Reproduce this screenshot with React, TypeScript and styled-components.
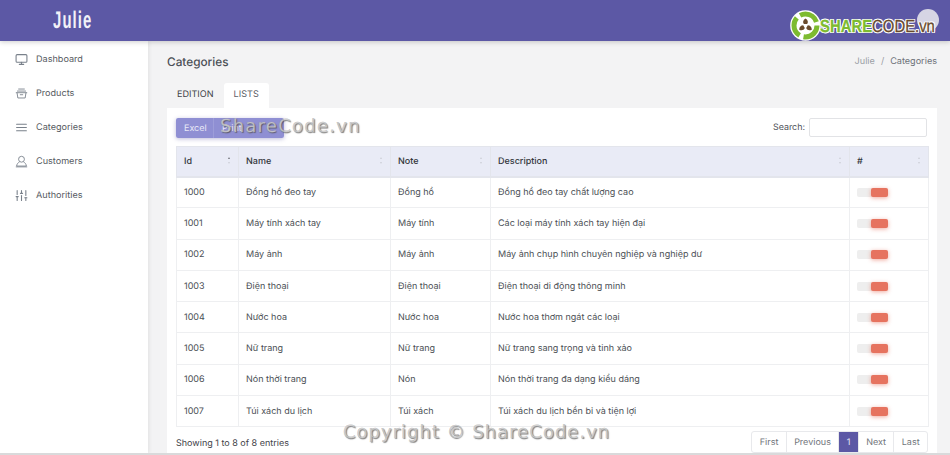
import styled, { createGlobalStyle } from "styled-components";
import { LuMonitor, LuAlignJustify, LuSlidersVertical } from "react-icons/lu";

const GlobalStyle = createGlobalStyle`
  html, body {
    margin: 0;
    padding: 0;
  }
  body {
    font-family: Inter, "Noto Sans", sans-serif;
    background: #f3f3f4;
    text-rendering: geometricPrecision;
  }
`;

const Page = styled.div`
  position: relative;
  width: 950px;
  height: 455px;
  overflow: hidden;
  display: flex;
  flex-direction: column;
  border-bottom: 2px solid #d9dadb;
  box-sizing: border-box;
`;

const Header = styled.header`
  height: 41px;
  flex: none;
  background: #5c58a5;
  box-shadow: 0 1px 5px rgba(0, 0, 0, 0.2);
  z-index: 2;
  display: flex;
  align-items: center;
  justify-content: space-between;
`;

const Brand = styled.div`
  margin-left: 53px;
  font-family: "Liberation Sans", sans-serif;
  font-weight: 700;
  font-size: 24px;
  color: #f2f1f8;
  letter-spacing: 1.8px;
  transform: scaleX(0.62);
  transform-origin: left center;
`;

const Avatar = styled.div`
  position: absolute;
  top: 9px;
  right: 11px;
  width: 22px;
  height: 22px;
  border-radius: 50%;
  background: #d6d5e4;
`;

const LogoWrap = styled.div`
  position: absolute;
  top: 10px;
  left: 790px;
  display: flex;
  align-items: center;
  z-index: 3;

  svg {
    flex: none;
  }
`;

const LogoText = styled.span<{ $color: string; $bold?: boolean }>`
  font-family: "Liberation Sans", sans-serif;
  font-size: 17.5px;
  font-weight: ${(p) => (p.$bold ? 700 : 400)};
  line-height: 22px;
  color: ${(p) => p.$color};
  -webkit-text-stroke: 0.3px ${(p) => p.$color};
  text-shadow: 1px 0 0 #fff, -1px 0 0 #fff, 0 1px 0 #fff, 0 -1px 0 #fff, 1px 1px 0 #fff, -1px -1px 0 #fff, 1px -1px 0 #fff, -1px 1px 0 #fff;
`;

const LogoName = styled.div`
  display: flex;
  flex: none;
  margin: 1px 0 0 -1px;
  transform: scaleX(0.85);
  transform-origin: left center;
  white-space: nowrap;
`;

const Body = styled.div`
  flex: 1;
  display: flex;
  min-height: 0;
`;

const Sidebar = styled.aside`
  width: 148px;
  flex: none;
  background: #fff;
  box-shadow: 1px 0 4px rgba(0, 0, 0, 0.08);
  padding-top: 1px;
  box-sizing: border-box;
`;

const NavItem = styled.div`
  height: 34px;
  display: flex;
  align-items: center;
  padding-left: 15px;
  gap: 8px;
  font-size: 9.1px;
  color: #565a61;

  svg {
    width: 13px;
    height: 13px;
    color: #79818b;
    flex: none;
  }
`;

const Main = styled.main`
  flex: 1;
  padding: 0 13px 0 19px;
  min-width: 0;
`;

const TitleRow = styled.div`
  height: 41px;
  display: flex;
  align-items: center;
  justify-content: space-between;
`;

const Title = styled.h1`
  margin: 0;
  font-size: 11.8px;
  font-weight: 500;
  color: #4b4f56;
`;

const Crumbs = styled.div`
  font-size: 9.1px;
  color: #9a9ea4;
  display: flex;
  gap: 6px;
`;

const CrumbCurrent = styled.span`
  color: #6c7178;
`;

const Tabs = styled.div`
  height: 26px;
  display: flex;
`;

const Tab = styled.div<{ $active?: boolean }>`
  height: 25px;
  margin-top: 1px;
  box-sizing: border-box;
  padding: 0 10px 2px;
  display: flex;
  align-items: center;
  font-size: 9.1px;
  border-radius: 3px 3px 0 0;
  color: ${(p) => (p.$active ? "#5d6167" : "#3f4349")};
  background: ${(p) => (p.$active ? "#fff" : "transparent")};
`;

const Card = styled.section`
  background: #fff;
  padding: 10px 9px 0;
  height: 345px;
  box-sizing: border-box;
`;

const Toolbar = styled.div`
  display: flex;
  justify-content: space-between;
  align-items: flex-start;
  height: 20px;
  margin-bottom: 8px;
`;

const ButtonGroup = styled.div`
  width: 108px;
  height: 20px;
  display: flex;
  border-radius: 2px;
  overflow: hidden;
  box-shadow: 0 1px 4px rgba(92, 88, 165, 0.4);
`;

const ExportButton = styled.div<{ $width: number }>`
  width: ${(p) => p.$width}px;
  display: flex;
  align-items: center;
  padding-left: 8px;
  box-sizing: border-box;
  background: #8f8fd3;
  color: #e9e9f7;
  font-size: 9px;

  & + & {
    border-left: 1px solid #9d9dd9;
  }
`;

const SearchBox = styled.label`
  display: flex;
  align-items: center;
  gap: 4px;
  margin-right: 1px;
  font-size: 8.9px;
  color: #4d5157;
`;

const SearchInput = styled.input`
  width: 118px;
  height: 19px;
  box-sizing: border-box;
  border: 1px solid #e2e3e6;
  border-radius: 2px;
  background: #fff;
  outline: none;
`;

const Table = styled.table`
  width: 752px;
  table-layout: fixed;
  border-collapse: collapse;
  border: 1px solid #eaecef;
`;

const HeadCell = styled.th<{ $width: number }>`
  position: relative;
  width: ${(p) => p.$width}px;
  height: 30px;
  padding: 0 7px;
  box-sizing: border-box;
  background: #e9ebf6;
  border: 1px solid #e3e5ec;
  border-bottom-width: 2px;
  text-align: left;
  font-size: 9px;
  font-weight: 500;
  color: #33363b;
`;

const SortMarks = styled.span`
  position: absolute;
  right: 8px;
  top: 10px;
  display: flex;
  flex-direction: column;
  gap: 3px;
`;

const SortMark = styled.i<{ $down?: boolean; $strong?: boolean }>`
  display: block;
  width: 0;
  height: 0;
  border-left: 1.5px solid transparent;
  border-right: 1.5px solid transparent;
  ${(p) => (p.$down ? "border-top" : "border-bottom")}: 2.5px solid ${(p) =>
    p.$strong ? "#6f7278" : "#cdd0d8"};
`;

const Row = styled.tr`
  height: 31.3px;
`;

const Cell = styled.td`
  padding: 0 7px;
  border: 1px solid #eeeff1;
  font-size: 9px;
  color: #4b4f55;
  white-space: nowrap;
  overflow: hidden;
`;

const Toggle = styled.div`
  display: flex;
  width: 31px;
  height: 9px;
  background: #eeeeee;
  border-radius: 2px;
`;

const ToggleKnob = styled.span`
  width: 17px;
  height: 9px;
  margin-left: auto;
  background: #e6735f;
  border-radius: 2px;
  box-shadow: 0 1px 4px rgba(230, 115, 95, 0.6);
`;

const Footer = styled.div`
  display: flex;
  justify-content: space-between;
  align-items: flex-start;
  height: 26px;
  font-size: 9px;
  color: #3f4349;
`;

const EntryCount = styled.span`
  margin-top: 11px;
`;

const Pagination = styled.div`
  display: flex;
  height: 22px;
  margin-top: 4px;
  border: 1px solid #e8e9ec;
  border-radius: 3px;
  box-sizing: border-box;
`;

const PageLink = styled.div<{ $active?: boolean }>`
  display: flex;
  align-items: center;
  padding: 0 7.4px;
  font-size: 9px;
  color: ${(p) => (p.$active ? "#e6e6f4" : "#71757b")};
  background: ${(p) => (p.$active ? "#5c58a5" : "transparent")};

  & + & {
    border-left: 1px solid #e8e9ec;
  }
`;

const Watermark = styled.div<{ $top: number; $left: number; $spacing: number }>`
  position: absolute;
  top: ${(p) => p.$top}px;
  left: ${(p) => p.$left}px;
  font-family: "DejaVu Sans", sans-serif;
  font-size: 18px;
  line-height: 1;
  letter-spacing: ${(p) => p.$spacing}px;
  color: rgba(205, 205, 205, 0.85);
  -webkit-text-stroke: 0.25px rgba(150, 150, 150, 0.8);
  text-shadow: 1px 1px 1px rgba(70, 70, 70, 0.7);
  white-space: nowrap;
  z-index: 5;
`;

const columns = [
  { label: "Id", width: 62, strong: true },
  { label: "Name", width: 152 },
  { label: "Note", width: 100 },
  { label: "Description", width: 359 },
  { label: "#", width: 79 },
];

const rows = [
  ["1000", "Đồng hồ đeo tay", "Đồng hồ", "Đồng hồ đeo tay chất lượng cao"],
  ["1001", "Máy tính xách tay", "Máy tính", "Các loại máy tính xách tay hiện đại"],
  ["1002", "Máy ảnh", "Máy ảnh", "Máy ảnh chụp hình chuyên nghiệp và nghiệp dư"],
  ["1003", "Điện thoại", "Điện thoại", "Điện thoại di động thông minh"],
  ["1004", "Nước hoa", "Nước hoa", "Nước hoa thơm ngát các loại"],
  ["1005", "Nữ trang", "Nữ trang", "Nữ trang sang trọng và tinh xảo"],
  ["1006", "Nón thời trang", "Nón", "Nón thời trang đa dạng kiểu dáng"],
  ["1007", "Túi xách du lịch", "Túi xách", "Túi xách du lịch bền bỉ và tiện lợi"],
];

function BasketIcon() {
  return (
    <svg viewBox="0 0 16 16" fill="none" stroke="currentColor" strokeWidth="1.1">
      <path d="M4 2.5h8M2.5 5h11" />
      <path d="M1 7h14M2.5 7l1 6.5h9l1-6.5" />
      <path d="M6 9.5h4" />
    </svg>
  );
}

function PersonIcon() {
  return (
    <svg viewBox="0 0 16 16" fill="none" stroke="currentColor" strokeWidth="1.1">
      <circle cx="8" cy="5.2" r="3.6" />
      <path d="M5.5 8.6C3.5 9.6 2.4 11 2 13.6h12c-.4-2.6-1.5-4-3.5-5" />
      <path d="M1 14.6h14" />
    </svg>
  );
}

function LogoMark() {
  return (
    <svg width="31" height="31" viewBox="0 0 31 31">
      <circle cx="15.5" cy="15.5" r="15.3" fill="#fff" />
      <circle
        cx="15.5"
        cy="15.5"
        r="11.5"
        fill="none"
        stroke="#7dbb30"
        strokeWidth="5"
        strokeDasharray="20 4.1"
      />
      <path d="M15.5 8.5c2.6 1.5 3 3.8 1.6 5.6h-3.2c-1.4-1.8-1-4.1 1.6-5.6z" fill="#6a4a2c" />
      <path d="M9.2 19.8c0-3 1.8-4.5 4-4.5l1.6 2.8c-.9 2.1-3 2.9-5.6 1.7z" fill="#6a4a2c" />
      <path d="M21.8 19.8c0-3-1.8-4.5-4-4.5l-1.6 2.8c.9 2.1 3 2.9 5.6 1.7z" fill="#6a4a2c" />
    </svg>
  );
}

function App() {
  return (
    <Page>
      <GlobalStyle />
      <Header>
        <Brand>Julie</Brand>
        <Avatar />
      </Header>
      <LogoWrap>
        <LogoMark />
        <LogoName>
          <LogoText $color="#7dbb30" $bold>
            SHARE
          </LogoText>
          <LogoText $color="#6a4a2c">CODE.vn</LogoText>
        </LogoName>
      </LogoWrap>
      <Body>
        <Sidebar>
          <NavItem>
            <LuMonitor />
            Dashboard
          </NavItem>
          <NavItem>
            <BasketIcon />
            Products
          </NavItem>
          <NavItem>
            <LuAlignJustify />
            Categories
          </NavItem>
          <NavItem>
            <PersonIcon />
            Customers
          </NavItem>
          <NavItem>
            <LuSlidersVertical />
            Authorities
          </NavItem>
        </Sidebar>
        <Main>
          <TitleRow>
            <Title>Categories</Title>
            <Crumbs>
              <span>Julie</span>
              <span>/</span>
              <CrumbCurrent>Categories</CrumbCurrent>
            </Crumbs>
          </TitleRow>
          <Tabs>
            <Tab>EDITION</Tab>
            <Tab $active>LISTS</Tab>
          </Tabs>
          <Card>
            <Toolbar>
              <ButtonGroup>
                <ExportButton $width={37}>Excel</ExportButton>
                <ExportButton $width={71}>Print</ExportButton>
              </ButtonGroup>
              <SearchBox>
                Search:
                <SearchInput />
              </SearchBox>
            </Toolbar>
            <Table>
              <thead>
                <tr>
                  {columns.map((col) => (
                    <HeadCell key={col.label} $width={col.width}>
                      {col.label}
                      <SortMarks>
                        <SortMark $strong={col.strong} />
                        <SortMark $down />
                      </SortMarks>
                    </HeadCell>
                  ))}
                </tr>
              </thead>
              <tbody>
                {rows.map((row) => (
                  <Row key={row[0]}>
                    {row.map((value, i) => (
                      <Cell key={i}>{value}</Cell>
                    ))}
                    <Cell>
                      <Toggle>
                        <ToggleKnob />
                      </Toggle>
                    </Cell>
                  </Row>
                ))}
              </tbody>
            </Table>
            <Footer>
              <EntryCount>Showing 1 to 8 of 8 entries</EntryCount>
              <Pagination>
                <PageLink>First</PageLink>
                <PageLink>Previous</PageLink>
                <PageLink $active>1</PageLink>
                <PageLink>Next</PageLink>
                <PageLink>Last</PageLink>
              </Pagination>
            </Footer>
          </Card>
        </Main>
      </Body>
      <Watermark $top={118} $left={220} $spacing={1.25}>
        ShareCode.vn
      </Watermark>
      <Watermark $top={424} $left={343} $spacing={1}>
        Copyright © ShareCode.vn
      </Watermark>
    </Page>
  );
}

export default App;
